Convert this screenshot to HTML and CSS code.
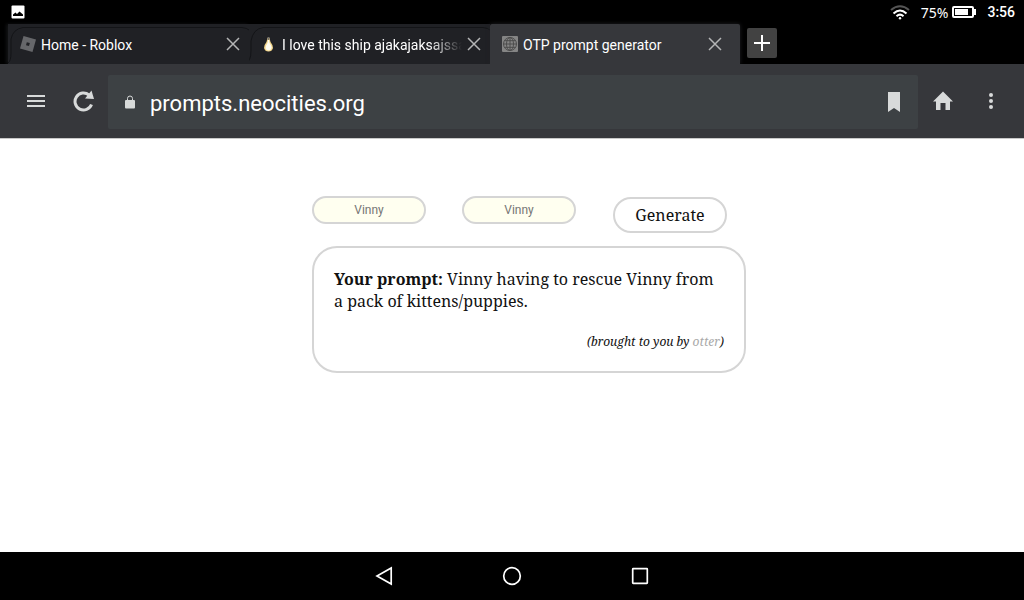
FILE: index.html
```html
<!DOCTYPE html>
<html lang="en">
  <head>
    <meta charset="UTF-8" />
    <meta name="viewport" content="width=device-width, initial-scale=1.0" />
    <title>OTP prompt generator</title>
    <link rel="stylesheet" href="styles.css" />
  </head>
  <body>
    <header>
      <div class="status">
        <svg width="14" height="14" viewBox="0 0 14 14">
          <rect x="0.5" y="0.5" width="13" height="13" rx="1" fill="#fff" />
          <path d="M2 11V9.500L4.500 7.500 6 9 8.500 6.500 12 9.500V11z" fill="#000" />
        </svg>
        <div class="statusRight">
          <svg class="wifi" width="20" height="15" viewBox="0 0 20 15" fill="none" stroke-width="2">
            <path d="M1 5Q10-2.500 19 5" stroke="#555" />
            <path d="M3.500 8.500Q10 2.500 16.500 8.500M6.500 11.300Q10 8 13.500 11.300" stroke="#fff" />
            <circle cx="10" cy="13.200" r="1.200" fill="#fff" />
          </svg>
          <span class="percent">75%</span>
          <svg class="battery" width="24" height="12" viewBox="0 0 24 12">
            <rect x="1" y="1" width="20" height="10" rx="1" fill="none" stroke="#fff" stroke-width="2" />
            <path d="M3 3H16V9H3zM22 3H24V9H22z" fill="#fff" />
          </svg>
          <span class="clock">3:56</span>
        </div>
      </div>

      <div class="tabs">
        <div class="tab">
          <svg class="outline" width="245" height="40" viewBox="0 0 245 40">
            <path d="M0 39Q3 37 3 29V15Q5 5 15 3.500H234Q239 4 241 6" />
          </svg>
          <svg class="favicon" width="16" height="16" viewBox="0 0 16 16">
            <path d="M3.500 0L16 3.500 12.500 16 0 12.500z" fill="#66676a" />
            <path d="M6.800 6.200L9.800 7 9 10 6 9.200z" fill="#202125" />
          </svg>
          <span class="title">Home - Roblox</span>
          <button class="close" aria-label="Close tab">
            <svg width="14" height="14" viewBox="0 0 14 14"><path d="M1 1L13 13M13 1L1 13" /></svg>
          </button>
        </div>
        <div class="tab">
          <svg class="outline" width="245" height="40" viewBox="0 0 245 40">
            <path d="M-4 39Q2 38 2 27V17Q4 5 14 3.500H234Q239 4 241 6" />
          </svg>
          <svg class="favicon" width="16" height="16" viewBox="0 0 16 16">
            <path d="M6.500 2L5.500 6Q3 9 3 12Q4 15.500 7.500 15.500T12 12Q12 9 9.500 6L8.500 2z" fill="#f4d78a" />
            <path d="M7 4L6.500 7Q4.300 10 4.500 12.500Q5.500 14.500 7.500 14.500T10.700 12Q10.500 9.500 8.600 7L8 4z" fill="#fffdf0" />
            <path d="M6.500 1H8.500V4H6.500z" fill="#77736a" />
          </svg>
          <span class="title faded">I love this ship ajakajaksajssahs</span>
          <button class="close" aria-label="Close tab">
            <svg width="14" height="14" viewBox="0 0 14 14"><path d="M1 1L13 13M13 1L1 13" /></svg>
          </button>
        </div>
        <div class="tab active">
          <svg class="favicon" width="16" height="16" viewBox="0 0 16 16">
            <rect width="16" height="16" rx="1" fill="#858585" />
            <g fill="none" stroke="#4c4c4c">
              <circle cx="8" cy="8" r="6.500" />
              <ellipse cx="8" cy="8" rx="3.500" ry="6.500" />
              <path d="M8 1.500V14.500M1.500 8H14.500M2.500 4.700H13.500M2.500 11.300H13.500" />
            </g>
          </svg>
          <span class="title">OTP prompt generator</span>
          <button class="close" aria-label="Close tab">
            <svg width="14" height="14" viewBox="0 0 14 14"><path d="M1 1L13 13M13 1L1 13" /></svg>
          </button>
        </div>
        <button class="newTab" aria-label="New tab">
          <svg width="16" height="16" viewBox="0 0 16 16"><path d="M8 0V16M0 8H16" stroke="#fff" stroke-width="2" /></svg>
        </button>
      </div>

      <div class="toolbar">
        <button class="tool" aria-label="Menu">
          <svg width="18" height="12" viewBox="0 0 18 12"><path d="M0 0H18V2H0zM0 5H18V7H0zM0 10H18V12H0z" /></svg>
        </button>
        <button class="tool" aria-label="Reload">
          <svg width="22" height="22" viewBox="0 0 22 22">
            <path d="M18.500 14.500A8.500 8.500 0 1 1 16 5" fill="none" stroke="#d8dada" stroke-width="3" />
            <path d="M18.500 0.500L21 9 12 8.500z" />
          </svg>
        </button>
        <div class="address">
          <svg width="10" height="14" viewBox="0 0 10 14">
            <rect y="5" width="10" height="8.500" rx="1" />
            <path d="M2.500 6V3.500Q2.500 1 5 1T7.500 3.500V6" fill="none" stroke="#d8dada" />
          </svg>
          <input type="text" aria-label="Address" value="prompts.neocities.org" />
          <button class="bookmark" aria-label="Bookmark">
            <svg width="12" height="20" viewBox="0 0 12 20"><path d="M0 0H12V20L6 16 0 20z" /></svg>
          </button>
        </div>
        <button class="tool home" aria-label="Home">
          <svg width="20" height="20" viewBox="0 0 20 20"><path d="M10 0.500L20 10.500H17V19H12.500V12H7.500V19H3V10.500H0z" /></svg>
        </button>
        <button class="tool" aria-label="More">
          <svg width="4" height="16" viewBox="0 0 4 16">
            <circle cx="2" cy="2" r="2" /><circle cx="2" cy="8" r="2" /><circle cx="2" cy="14" r="2" />
          </svg>
        </button>
      </div>
    </header>

    <main>
      <div class="generator">
        <form class="names">
          <input type="text" name="first" aria-label="First name" placeholder="Vinny" />
          <input type="text" name="second" aria-label="Second name" placeholder="Vinny" />
          <button type="button">Generate</button>
        </form>
        <section class="prompt">
          <p><b>Your prompt:</b> Vinny having to rescue Vinny from a pack of kittens/puppies.</p>
          <p class="credit">(brought to you by <a href="#">otter</a>)</p>
        </section>
      </div>
    </main>

    <nav>
      <button aria-label="Back">
        <svg width="20" height="20" viewBox="0 0 20 20"><path d="M17.200 2V18L3 10z" /></svg>
      </button>
      <button aria-label="Home screen">
        <svg width="20" height="20" viewBox="0 0 20 20"><circle cx="10" cy="10" r="8.300" /></svg>
      </button>
      <button aria-label="Recent apps">
        <svg width="20" height="20" viewBox="0 0 20 20"><rect x="2.700" y="2.700" width="14.600" height="14.600" rx="0.500" /></svg>
      </button>
    </nav>
  </body>
</html>
```
FILE: styles.css
```css
* {
  box-sizing: border-box;
}
body {
  margin: 0;
  min-height: 100vh;
  display: flex;
  flex-direction: column;
  background-color: white;
  font-family: Roboto, sans-serif;
}
button {
  display: flex;
  align-items: center;
  justify-content: center;
  padding: 0;
  border: none;
  background: none;
}
svg {
  flex: none;
}

/* status bar */
.status {
  display: flex;
  align-items: center;
  justify-content: space-between;
  height: 24px;
  padding: 0 9px 0 11px;
  background-color: black;
  color: white;
  font-size: 14px;
}
.statusRight {
  display: flex;
  align-items: center;
}
.percent {
  margin: 0 4px 0 11px;
  font-family: "Noto Sans", sans-serif;
}
.clock {
  margin-left: 11px;
  font-weight: 500;
}

/* tabs */
.tabs {
  display: flex;
  height: 40px;
  padding-left: 8px;
  background-color: black;
}
.tab {
  position: relative;
  display: flex;
  align-items: center;
  flex: 0 1 241px;
  min-width: 0;
  padding: 0 9px 0 12px;
  background-color: #202125;
}
.tab:first-child {
  box-shadow: -2px 0 3px #111214;
}
.outline {
  position: absolute;
  top: 0;
  left: 0;
  fill: none;
  stroke: #131417;
}
.active {
  flex-basis: 250px;
  padding-right: 18px;
  border-radius: 2px 2px 0 0;
  background-color: #36373b;
  box-shadow: 0 0 4px #202125;
}
.title {
  flex: 1;
  margin: 2px 5px 0 5px;
  overflow: hidden;
  white-space: nowrap;
  color: white;
  font-size: 14px;
}
.faded {
  mask-image: linear-gradient(to right, black 82%, transparent);
}
.close svg {
  stroke: #b4b5b6;
  stroke-width: 1.5;
}
.newTab {
  width: 30px;
  height: 30px;
  margin: 4px 0 0 7px;
  border-radius: 2px;
  background-color: #424242;
}

/* toolbar */
.toolbar {
  display: flex;
  align-items: center;
  height: 75px;
  padding: 0 9px 0 12px;
  border-bottom: 1px solid #c8c8c8;
  background-color: #36373b;
  /* covers the active tab's shadow */
  position: relative;
}
.toolbar svg {
  fill: #d8dada;
}
.tool {
  width: 48px;
  height: 48px;
}
.address {
  flex: 1;
  display: flex;
  align-items: center;
  height: 54px;
  margin-top: 2px;
  padding: 0 18px 0 17px;
  border-radius: 2px;
  background-color: #3d4144;
}
.address input {
  flex: 1;
  min-width: 0;
  padding: 2px 0 0;
  margin-left: 15px;
  border: none;
  background: none;
  color: white;
  font-family: inherit;
  font-size: 22px;
}
.home {
  margin-left: 1px;
}

/* page */
main {
  flex: 1;
  padding: 57px 0 20px 34px;
  color: #111;
  font-family: "Noto Serif", "DejaVu Serif Condensed", "Liberation Serif", serif;
  font-size: 16px;
}
.generator {
  max-width: 434px;
  margin: 0 auto;
}
.names {
  display: flex;
  align-items: flex-start;
  gap: 36px;
}
.names input,
.names button {
  width: 114px;
  border: 2px solid #d5d5d5;
  border-radius: 20px;
}
.names input {
  height: 28px;
  background-color: ivory;
  font-family: Roboto, sans-serif;
  font-size: 12px;
  text-align: center;
}
.names button {
  height: 36px;
  margin: 1px 0 0 1px;
  background-color: white;
  color: #111;
  font: inherit;
}
.prompt {
  margin-top: 13px;
  padding: 20px;
  border: 2px solid #d5d5d5;
  border-radius: 25px;
  line-height: 22px;
}
.prompt p {
  margin: 0;
}
.prompt .credit {
  margin-top: 21px;
  font-size: 12px;
  font-style: italic;
  line-height: 18px;
  text-align: right;
}
.credit a {
  color: #a9a9a9;
  text-decoration: none;
}

/* bottom navigation */
nav {
  display: flex;
  align-items: center;
  justify-content: center;
  gap: 80px;
  height: 48px;
  background-color: black;
}
nav button {
  width: 48px;
  height: 48px;
}
nav svg {
  fill: none;
  stroke: white;
  stroke-width: 1.7;
}
```
